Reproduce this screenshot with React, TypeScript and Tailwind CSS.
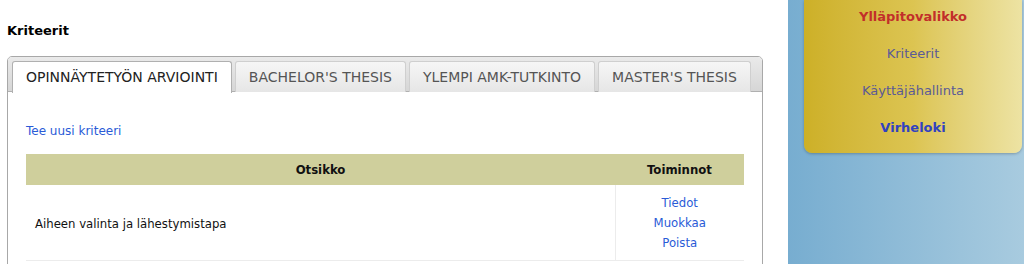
import React from 'react'

// välilehdet
const tabs = [
  { id: 'oa', label: 'OPINNÄYTETYÖN ARVIOINTI', active: true },
  { id: 'bt', label: "BACHELOR'S THESIS" },
  { id: 'ya', label: 'YLEMPI AMK-TUTKINTO' },
  { id: 'mt', label: "MASTER'S THESIS" }
]

const rows = [{ id: 1, title: 'Aiheen valinta ja lähestymistapa' }]

function App() {
  return (
    <div className="flex h-[264px] overflow-hidden bg-white">
      {/* sisältö */}
      <div className="w-[763px] shrink-0 pl-[7px]">
        <h2 className="pt-[23px] text-[13px] font-bold leading-[16px] text-black [font-family:Verdana,'DejaVu_Sans',sans-serif]">
          Kriteerit
        </h2>

        <div className="mt-[17px] h-[300px] rounded-t-[5px] border border-[#a8a8a8] bg-white">
          <div className="flex h-[35px] gap-[3px] rounded-t-[4px] border-b border-[#b0b0b0] bg-gradient-to-b from-[#eaeaea] to-[#d6d6d6] pl-[4px] pt-[4px]">
            {tabs.map(tab => (
              <div
                key={tab.id}
                className={
                  tab.active
                    ? '-mb-px flex h-[32px] items-center rounded-t-[3px] border border-b-0 border-[#b0b0b0] bg-white px-[13px] text-[14px] text-[#222] [font-family:Verdana,\'DejaVu_Sans\',sans-serif]'
                    : 'flex h-[31px] items-center rounded-t-[3px] border border-b-0 border-[#cfcfcf] bg-gradient-to-b from-[#f6f6f6] to-[#e6e6e6] px-[13px] text-[14px] text-[#555] [font-family:Verdana,\'DejaVu_Sans\',sans-serif]'
                }
              >
                {tab.label}
              </div>
            ))}
          </div>

          <div className="px-[18px] pt-[25px]">
            <a href="#" className="text-[12px] leading-[16px] text-[#2a5bd7] [font-family:Verdana,'DejaVu_Sans',sans-serif]">
              Tee uusi kriteeri
            </a>

            <table className="mt-[13px] w-[718px] border-collapse text-[13px] [font-family:Tahoma,'DejaVu_Sans_Condensed','DejaVu_Sans',sans-serif]">
              <thead>
                <tr className="h-[31px] bg-[#cfcf9c] text-[#111]">
                  <th className="font-bold">Otsikko</th>
                  <th className="w-[129px] font-bold">Toiminnot</th>
                </tr>
              </thead>
              <tbody>
                {rows.map(row => (
                  <tr key={row.id} className="h-[75px] border-b border-[#ececec]">
                    <td className="pl-[9px] pt-[2px] text-[#111]">{row.title}</td>
                    <td className="border-l border-[#ececec] text-center leading-[20px]">
                      <div className="flex flex-col items-center pt-[1px]">
                        <a href="#" className="text-[#2a5bd7]">Tiedot</a>
                        <a href="#" className="text-[#2a5bd7]">Muokkaa</a>
                        <a href="#" className="text-[#2a5bd7]">Poista</a>
                      </div>
                    </td>
                  </tr>
                ))}
              </tbody>
            </table>
          </div>
        </div>
      </div>

      {/* sivupalkki */}
      <div className="ml-[25px] flex-1 bg-gradient-to-r from-[#77add0] to-[#a8cbdf] pl-[16px] pr-[2px]">
        <div className="flex h-[153px] flex-col items-center rounded-b-[8px] bg-gradient-to-r from-[#cdb027] via-[#dcc451] to-[#ede3a3] pt-[8px] shadow-[0_1px_3px_rgba(0,0,0,0.25)] [font-family:'Lucida_Grande','DejaVu_Sans',sans-serif]">
          <div className="text-[13px] font-bold leading-[18px] text-[#c22f2a]">Ylläpitovalikko</div>
          <a href="#" className="mt-[19px] text-[13px] leading-[18px] text-[#5a5a96]">Kriteerit</a>
          <a href="#" className="mt-[19px] text-[13px] leading-[18px] text-[#5a5a96]">Käyttäjähallinta</a>
          <a href="#" className="mt-[19px] text-[13px] font-semibold leading-[18px] text-[#3142c0]">Virheloki</a>
        </div>
      </div>
    </div>
  )
}

export default App
